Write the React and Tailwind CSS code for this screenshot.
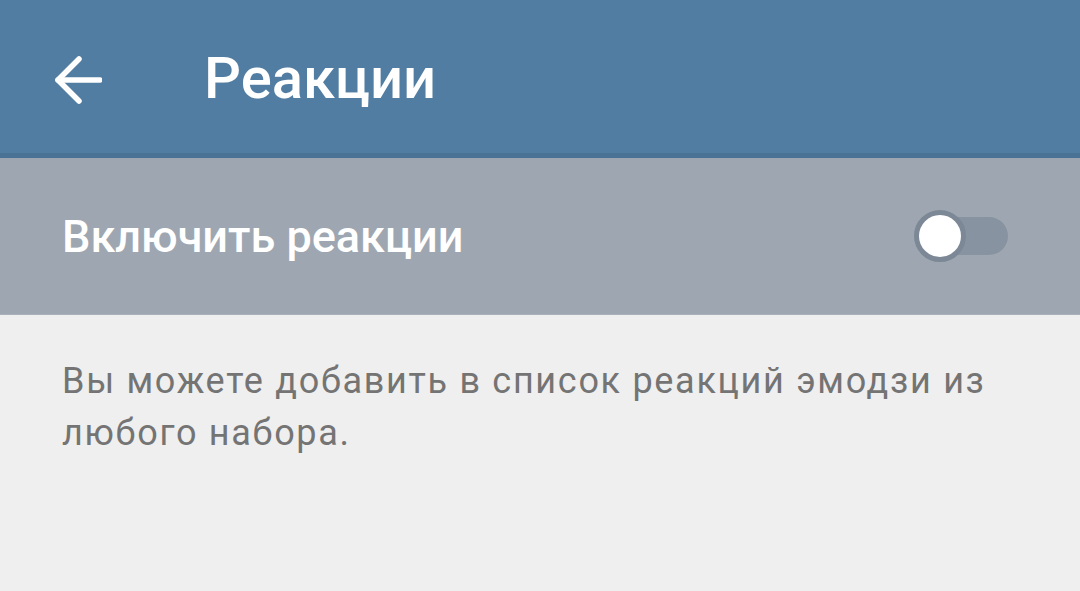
import { useState } from "react";

// Back arrow drawn to match the Android toolbar icon
function BackArrow() {
  return (
    <svg width="48" height="48" viewBox="0 0 48 48" fill="none" stroke="white" strokeWidth="5.5" strokeLinecap="round" strokeLinejoin="round">
      <path d="M46 24H4" />
      <path d="M25 3 4 24l21 21" />
    </svg>
  );
}

function Toggle({ on, onChange }) {
  return (
    <button
      type="button"
      onClick={() => onChange(!on)}
      className="relative w-[96px] h-[56px] flex items-center"
    >
      <span className="absolute left-[18px] right-[2px] h-[38px] rounded-full bg-[#8793a0]" />
      <span
        className={
          "absolute top-[2px] w-[52px] h-[52px] rounded-full bg-white border-[5px] border-[#7c8896] " +
          (on ? "left-[44px]" : "left-0")
        }
      />
    </button>
  );
}

export default function App() {
  const [enabled, setEnabled] = useState(false);

  return (
    <div className="w-[1080px] h-[591px] bg-[#efefef] overflow-hidden" style={{ fontFamily: "Roboto, 'Noto Sans', sans-serif" }}>
      <div className="h-[153px] bg-[#517da2] flex items-center">
        <div className="w-[204px] pl-[54px] pt-[6px] flex items-center">
          <BackArrow />
        </div>
        <h1 className="text-white text-[58px] font-medium leading-none pt-[2px]">Реакции</h1>
      </div>
      <div className="h-[5px] bg-[#4a7294]" />

      <div className="h-[157px] bg-[#9ea7b1] flex items-center justify-between pl-[62px] pr-[70px] border-b border-[#a8b0b9]">
        <span className="text-white text-[45px] font-medium leading-none">Включить реакции</span>
        <Toggle on={enabled} onChange={setEnabled} />
      </div>

      <p className="pl-[62px] pr-[60px] pt-[40px] text-[#747474] text-[36px] leading-[52px] tracking-[1.7px]">
        Вы можете добавить в список реакций эмодзи из любого набора.
      </p>
    </div>
  );
}
